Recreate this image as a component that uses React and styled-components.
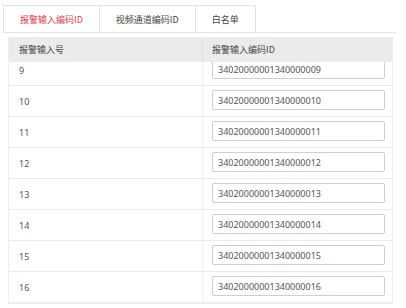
import React, { useLayoutEffect, useRef } from 'react';
import styled, { createGlobalStyle } from 'styled-components';

const GlobalStyle = createGlobalStyle`
    html, body {
        margin: 0;
        padding: 0;
        background: #ffffff;
    }
    body {
        font-family: "Noto Sans CJK SC", "Noto Sans", sans-serif;
        color: #444;
    }
`;

const tabs = ['报警输入编码ID', '视频通道编码ID', '白名单'];

// page 2 of the alarm input list (inputs 9 - 16)
const rows = Array.from({ length: 8 }, (_, i) => ({
    no: i + 9,
    code: '34020000001340000' + String(i + 9).padStart(3, '0'),
}));

function App() {
    const bodyRef = useRef(null);

    // the list is scrolled down to its bottom
    useLayoutEffect(() => {
        if (bodyRef.current) {
            bodyRef.current.scrollTop = bodyRef.current.scrollHeight;
        }
    }, []);

    return (
        <Page>
            <GlobalStyle />
            <TabBar>
                {tabs.map((t, i) => (
                    <Tab key={t} $active={i === 0}>{t}</Tab>
                ))}
            </TabBar>
            <Table>
                <HeadRow>
                    <HeadCell>报警输入号</HeadCell>
                    <HeadCell $divider>报警输入编码ID</HeadCell>
                </HeadRow>
                <Body ref={bodyRef}>
                    {rows.map((r) => (
                        <Row key={r.no}>
                            <NoCell>{r.no}</NoCell>
                            <InputCell>
                                <CodeInput defaultValue={r.code} />
                            </InputCell>
                        </Row>
                    ))}
                </Body>
            </Table>
        </Page>
    );
}

const Page = styled.div`
    width: 406px;
    height: 308px;
    overflow: hidden;
    padding-top: 5px;
    box-sizing: border-box;
`;

const TabBar = styled.div`
    display: flex;
    margin: 0 10px 0 3px;
    border-bottom: 1px solid #e3e3e3;
`;

const Tab = styled.div`
    height: 26px;
    padding: 0 16px;
    display: flex;
    align-items: center;
    border: 1px solid #e3e3e3;
    border-bottom: none;
    margin-left: -1px;
    background: #ffffff;
    font-size: 9px;
    color: ${(p) => (p.$active ? '#d9434f' : '#444')};
    white-space: nowrap;

    &:first-child {
        margin-left: 0;
    }
`;

const Table = styled.div`
    margin: 4px 0 0 8px;
    width: 385px;
    border: 1px solid #eeeeee;
    border-top: none;
    box-sizing: border-box;
`;

const HeadRow = styled.div`
    display: grid;
    grid-template-columns: 193px 1fr;
    height: 25px;
    background: #ebebeb;
`;

const HeadCell = styled.div`
    display: flex;
    align-items: center;
    padding-left: ${(p) => (p.$divider ? '9px' : '10px')};
    font-size: 9px;
    color: #444;
    border-left: ${(p) => (p.$divider ? '1px solid #e2e2e2' : 'none')};
`;

const Body = styled.div`
    height: 241px;
    overflow-y: auto;
    scrollbar-width: none;

    &::-webkit-scrollbar {
        display: none;
    }
`;

const Row = styled.div`
    display: grid;
    grid-template-columns: 193px 1fr;
    height: 31px;
    box-sizing: border-box;
    border-bottom: 1px solid #ebebeb;
`;

const NoCell = styled.div`
    display: flex;
    align-items: center;
    padding-left: 10px;
    font-family: "Noto Sans", sans-serif;
    font-size: 9px;
    color: #555;
`;

const InputCell = styled.div`
    padding: 4px 7px 0 9px;
    border-left: 1px solid #f0f0f0;
`;

const CodeInput = styled.input`
    display: block;
    width: 100%;
    height: 20px;
    box-sizing: border-box;
    border: 1px solid #cfcfcf;
    border-radius: 2px;
    padding: 0 5px;
    font-family: "Noto Sans", sans-serif;
    font-size: 9px;
    color: #555;
    outline: none;
`;

export default App;
